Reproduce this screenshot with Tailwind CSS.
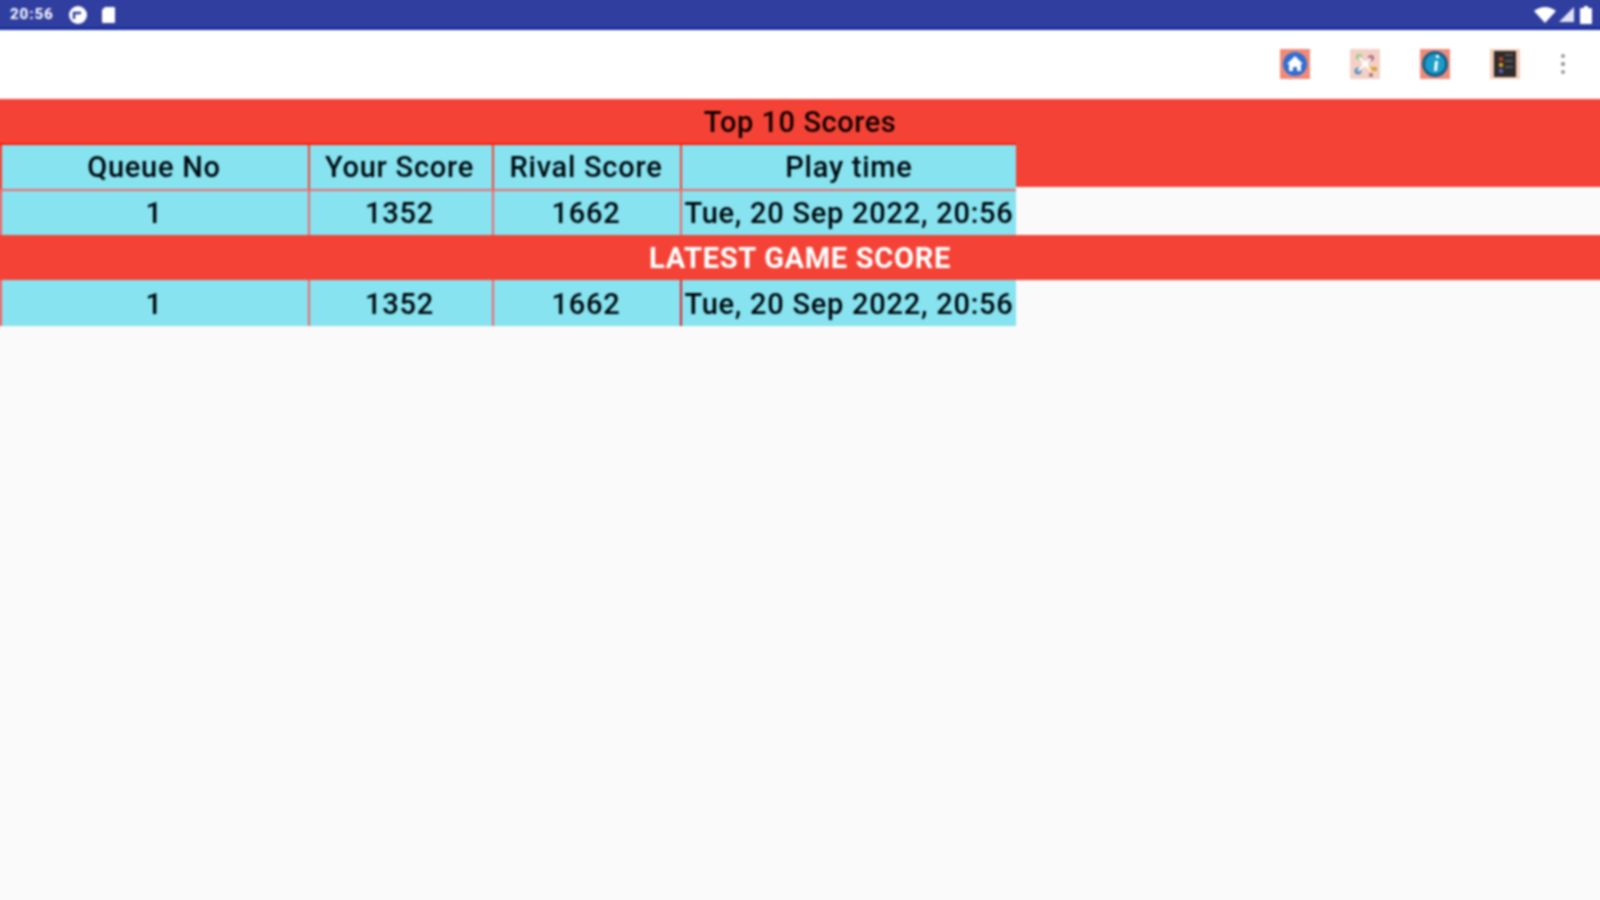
<!DOCTYPE html>
<html lang="en">
<head>
    <meta charset="UTF-8">
    <title>Top 10 Scores</title>
    <script src="https://cdn.jsdelivr.net/npm/@tailwindcss/browser@4"></script>
</head>
<body class="bg-[#fafafa] font-['Roboto',sans-serif] w-[1600px] h-[900px] overflow-hidden">
    <!-- wrapper runs 4px past the window so the blur doesn't fade the edges -->
    <div class="blur-[0.8px] -mx-[4px] -mt-[4px]">
    <!-- Status bar -->
    <div class="h-[34px] bg-[#303f9f] border-b-[3px] border-[#1a2fa0] flex items-center pt-[6px] pl-[14px] pr-[12px] text-white">
        <span class="text-[15px] font-bold tracking-[1px] w-[48px]">20:56</span>
        <svg class="w-[20px] h-[20px] ml-[10px]" viewBox="0 0 20 20"><circle cx="10" cy="10" r="9" fill="#fff"/><path d="M6 14V8h7" fill="none" stroke="#303f9f" stroke-width="2.5"/></svg>
        <svg class="w-[16px] h-[18px] ml-[12px]" viewBox="0 0 16 18"><path d="M5 1h9a1 1 0 0 1 1 1v14a1 1 0 0 1-1 1H3a1 1 0 0 1-1-1V4z" fill="#fff"/></svg>
        <div class="ml-auto flex items-center gap-[3px]">
            <svg class="w-[22px] h-[16px]" viewBox="0 0 22 16"><path d="M0 4q11-8 22 0L11 16z" fill="#fff"/></svg>
            <svg class="w-[15px] h-[15px]" viewBox="0 0 15 15"><path d="M15 0v15H0z" fill="#fff" fill-opacity=".85"/></svg>
            <svg class="w-[12px] h-[18px] ml-[3px]" viewBox="0 0 12 18"><path d="M4 0h4v2h3a1 1 0 0 1 1 1v14a1 1 0 0 1-1 1H1a1 1 0 0 1-1-1V3a1 1 0 0 1 1-1h3z" fill="#fff"/></svg>
        </div>
    </div>

    <!-- Toolbar -->
    <div class="h-[69px] bg-white flex items-center justify-end pr-[38px] pb-[2px]">
        <div class="flex items-center gap-[40px]">
            <svg class="w-[30px] h-[30px]" viewBox="0 0 30 30"><rect width="30" height="30" fill="#f08a78"/><circle cx="15" cy="15" r="12" fill="#2f6fd0"/><path d="M15 7l8 8h-2v7h-4v-4h-4v4H9v-7H7z" fill="#fff"/></svg>
            <svg class="w-[30px] h-[30px]" viewBox="0 0 30 30"><rect width="30" height="30" fill="#f3d0c6"/><circle cx="9" cy="8" r="3" fill="#9cc48a"/><circle cx="21" cy="9" r="3" fill="#a86a80"/><circle cx="15" cy="15" r="3" fill="#fff"/><circle cx="8" cy="22" r="3.5" fill="#5f8fc0"/><rect x="18" y="18" width="9" height="4" fill="#d9a63c"/><circle cx="21" cy="26" r="2" fill="#a86a80"/><path d="M9 8l12 14M21 9L8 22" stroke="#fff" stroke-width="2"/></svg>
            <svg class="w-[30px] h-[30px]" viewBox="0 0 30 30"><rect width="30" height="30" fill="#f08a78"/><circle cx="15" cy="15" r="13" fill="#15608e"/><circle cx="15" cy="15" r="10" fill="#1c9cc8"/><path d="M15 12l-1 10h3l1-10zM16 6h3v3h-3z" fill="#fff"/></svg>
            <svg class="w-[30px] h-[30px]" viewBox="0 0 30 30"><rect width="30" height="30" fill="#f5cdb8"/><rect x="4" y="2" width="22" height="26" fill="#2c2c2c"/><rect x="9" y="8" width="4" height="4" fill="#c0392b"/><rect x="9" y="14" width="4" height="4" fill="#c9a227"/><rect x="9" y="20" width="4" height="4" fill="#5a5fc0"/><path d="M15 6h8M15 12h8M15 18h8" stroke="#555" stroke-width="2"/></svg>
            <svg class="w-[6px] h-[22px]" viewBox="0 0 6 22"><circle cx="3" cy="3" r="2" fill="#999"/><circle cx="3" cy="11" r="2" fill="#888"/><circle cx="3" cy="19" r="2" fill="#999"/></svg>
        </div>
    </div>

    <!-- Top 10 Scores -->
    <div class="h-[44px] pt-[3px] bg-[#f44336] flex items-center justify-center text-[29px] font-medium tracking-[0.55px] text-[#120000]">Top 10 Scores</div>
    <div class="flex h-[46px]">
        <div class="flex w-[1020px] border-t-[2px] border-[#ff1a0a]">
            <div class="w-[312px] pl-[6px] bg-[#f44336]"><div class="h-full pt-[2px] pr-[2px] bg-[#86e3ef] flex items-center justify-center text-[29px] font-medium tracking-[0.75px] text-[#000a10]">Queue No</div></div>
            <div class="w-[184px] pl-[2px] bg-[#f44336]"><div class="h-full pt-[2px] pr-[3px] bg-[#86e3ef] flex items-center justify-center text-[29px] font-medium tracking-[0.75px] text-[#000a10]">Your Score</div></div>
            <div class="w-[188px] pl-[2px] bg-[#f44336]"><div class="h-full pt-[2px] pr-[2px] bg-[#86e3ef] flex items-center justify-center text-[29px] font-medium tracking-[0.75px] text-[#000a10]">Rival Score</div></div>
            <div class="w-[336px] pl-[2px] bg-[#f44336]"><div class="h-full pt-[2px] bg-[#86e3ef] flex items-center justify-center text-[29px] font-medium tracking-[0.75px] text-[#000a10]">Play time</div></div>
        </div>
        <div class="flex-1 h-[44px] bg-[#f44336]"></div>
    </div>
    <div class="flex w-[1020px] h-[46px] border-t-[2px] border-[#f06a6a]">
        <div class="w-[312px] pl-[6px] bg-[#f0686a]"><div class="h-full pt-[2px] pr-[2px] bg-[#86e3ef] flex items-center justify-center text-[29px] font-medium tracking-[0.75px] text-[#000a10]">1</div></div>
        <div class="w-[184px] pl-[2px] bg-[#f0686a]"><div class="h-full pt-[2px] pr-[3px] bg-[#86e3ef] flex items-center justify-center text-[29px] font-medium tracking-[0.75px] text-[#000a10]">1352</div></div>
        <div class="w-[188px] pl-[2px] bg-[#f0686a]"><div class="h-full pt-[2px] pr-[2px] bg-[#86e3ef] flex items-center justify-center text-[29px] font-medium tracking-[0.75px] text-[#000a10]">1662</div></div>
        <div class="w-[336px] pl-[2px] bg-[#f0686a]"><div class="h-full pt-[2px] bg-[#86e3ef] flex items-center justify-center text-[29px] font-medium tracking-[0.75px] text-[#000a10] whitespace-nowrap">Tue, 20 Sep 2022, 20:56</div></div>
    </div>

    <!-- Latest game score -->
    <div class="h-[45px] pt-[3px] bg-[#f44336] flex items-center justify-center text-[29px] font-bold tracking-[0.7px] text-white">LATEST GAME SCORE</div>
    <div class="flex w-[1020px] h-[46px]">
        <div class="w-[312px] pl-[6px] bg-[#f0686a]"><div class="h-full pt-[4px] pr-[2px] bg-[#86e3ef] flex items-center justify-center text-[29px] font-medium tracking-[0.75px] text-[#000a10]">1</div></div>
        <div class="w-[184px] pl-[2px] bg-[#f0686a]"><div class="h-full pt-[4px] pr-[3px] bg-[#86e3ef] flex items-center justify-center text-[29px] font-medium tracking-[0.75px] text-[#000a10]">1352</div></div>
        <div class="w-[188px] pl-[2px] bg-[#f0686a]"><div class="h-full pt-[4px] pr-[2px] bg-[#86e3ef] flex items-center justify-center text-[29px] font-medium tracking-[0.75px] text-[#000a10]">1662</div></div>
        <div class="w-[336px] pl-[2px] bg-[#e2202a]"><div class="h-full pt-[4px] bg-[#86e3ef] flex items-center justify-center text-[29px] font-medium tracking-[0.75px] text-[#000a10] whitespace-nowrap">Tue, 20 Sep 2022, 20:56</div></div>
    </div>
    </div>
</body>
</html>
